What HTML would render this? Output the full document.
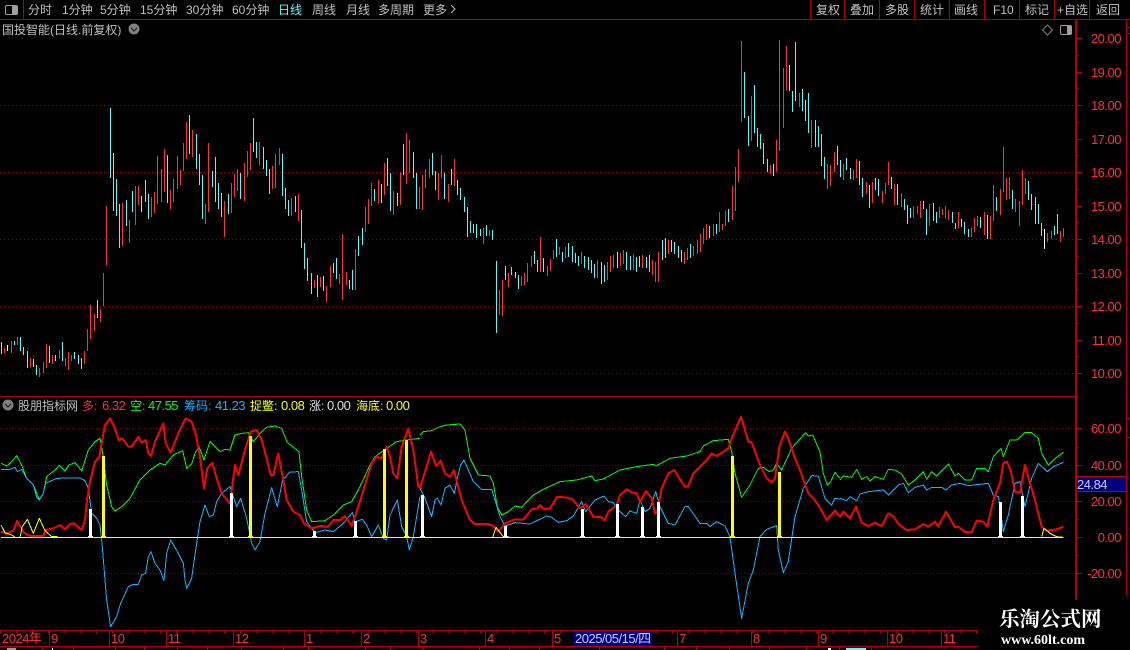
<!DOCTYPE html>
<html><head><meta charset="utf-8"><style>
html,body{margin:0;padding:0;background:#000;overflow:hidden}
svg{display:block}
text{font-family:"Liberation Sans","WenQuanYi Zen Hei","Noto Sans CJK SC",sans-serif;font-size:12px}
.n{font-size:13px;letter-spacing:-.5px}
.g{fill:#c0c0c0}
.a{fill:#ff3232;text-anchor:end}
.b{fill:#ff3232}
.c{stroke:#54fcfc;stroke-width:3;fill:none;shape-rendering:crispEdges}
.r{stroke:#ff3232;stroke-width:3;fill:none;shape-rendering:crispEdges}
.w{stroke:#fff;stroke-width:3;fill:none;shape-rendering:crispEdges}
.l{fill:none;stroke-linejoin:round;shape-rendering:crispEdges}
</style></head><body>
<svg width="1130" height="650" viewBox="0 0 1130 650" xmlns="http://www.w3.org/2000/svg">
<rect width="1130" height="650" fill="#000"/>
<!-- grid -->
<g stroke="#a00000" stroke-dasharray="1 3" shape-rendering="crispEdges" fill="none">
<path d="M0 105.5H1075M0 172.5H1075M0 239.5H1075M0 306.5H1075M0 373.5H1075"/>
</g>
<g stroke="#800000" stroke-dasharray="1 2" shape-rendering="crispEdges" fill="none">
<path d="M0 428.5H1075M0 465.5H1075M0 501.5H1075M0 573.5H1075"/>
</g>
<!-- candles -->
<g transform="translate(0,100) scale(.33333)">
<path class="c" d="M4 726V762M43 723V735M61 711V753M70 741V765M82 753V804M100 777V801M109 795V825M148 738V789M166 765V783M187 726V783M223 756V777M235 765V792M244 774V807M292 600V654M331 24V234M340 159V333M349 237V348M358 312V444M379 300V378M397 273V336M424 288V336M436 240V306M445 282V357M502 165V309M568 45V162M589 102V207M598 162V255M607 225V357M637 213V261M646 171V306M655 249V327M664 279V351M685 282V342M721 219V297M760 54V156M769 126V174M790 141V207M799 180V228M808 207V282"/>
<path class="r" d="M13 744V759M34 723V759M52 711V735M91 774V801M118 804V831M130 786V819M139 732V804M157 765V792M178 750V777M196 774V798M205 756V810M214 765V783M253 753V792M262 687V753M271 615V717M283 642V693M301 627V666M310 519V618M319 318V495M367 309V438M388 360V429M406 258V375M415 258V315M454 291V351M463 276V339M472 168V312M484 207V306M493 147V276M511 270V327M520 237V306M532 168V267M541 210V255M550 129V213M559 66V177M577 90V171M616 312V372M625 129V336M673 303V411M694 249V339M703 222V291M712 207V273M733 189V303M742 153V231M751 129V210M778 126V195M817 198V267M826 162V264M838 144V195"/>
<path class="w" d="M22 735V753"/>
</g>
<g transform="translate(280,120) scale(.33333)">
<path class="c" d="M7 102V228M16 204V267M25 240V288M46 228V276M64 270V384M73 369V447M82 414V483M94 459V522M112 465V531M130 468V513M160 429V459M169 414V477M208 480V507M217 450V510M235 348V408M247 324V375M283 207V243M304 192V249M322 114V198M331 159V273M352 219V258M370 72V165M400 96V174M409 159V267M457 99V165M466 153V210M493 159V237M514 147V195M532 180V225M541 204V240M553 231V276M562 261V351M571 303V339M580 312V339M589 312V354M601 327V348M619 315V348M637 330V360M649 423V639M676 438V480M694 441V465M706 456V474M715 465V507M763 393V432M772 420V456M790 414V456M829 357V411"/>
<path class="r" d="M34 234V288M55 222V303M103 480V504M121 471V501M139 498V546M151 438V501M178 462V492M187 342V540M199 456V495M226 387V510M256 261V336M265 237V312M274 189V258M295 180V249M313 129V225M340 213V285M361 156V255M379 39V192M388 60V159M418 201V267M427 165V270M436 147V204M448 117V174M475 159V240M484 105V174M505 192V246M523 117V198M610 324V372M628 330V348M658 510V585M667 480V588M685 459V501M724 468V498M733 459V495M742 429V486M754 408V441M781 351V456M802 438V468M811 417V453M820 390V417M838 381V405"/>
</g>
<g shape-rendering="crispEdges" fill="none" stroke-width="1">
<path stroke="#54fcfc" d="M562.5 252V262M568.5 243V257M572.5 246V262M575.5 253V263M578.5 256V266M584.5 256V268M588.5 257V270M591.5 260V273M594.5 264V278M601.5 262V284M604.5 265V282M617.5 252V268M626.5 252V270M630.5 256V270M636.5 257V272M639.5 256V267M646.5 257V268M649.5 255V272M662.5 240V260M665.5 238V258M671.5 240V252M674.5 242V254M678.5 246V258M681.5 250V262M690.5 244V258M709.5 226V238M716.5 224V234"/>
<path stroke="#ff3232" d="M565.5 247V258M581.5 252V264M597.5 260V278M607.5 262V280M610.5 256V272M613.5 255V268M620.5 253V266M623.5 250V264M633.5 254V270M642.5 255V268M652.5 260V275M655.5 262V282M658.5 252V282M668.5 240V254M684.5 252V264M687.5 248V260M693.5 246V256M697.5 240V254M700.5 234V252M703.5 228V244M706.5 224V240M713.5 224V236M719.5 212V232"/>
</g>
<g transform="translate(720,30) scale(.33333)">
<path class="c" d="M25 537V576M73 126V264M85 258V348M103 165V309M112 294V351M121 312V357M130 339V402M142 387V426M160 402V438M208 105V183M217 183V246M226 36V213M247 177V243M256 210V273M265 189V309M286 270V351M295 288V351M304 312V408M313 381V447M352 348V405M361 390V441M379 384V420M391 414V447M418 393V465M427 444V501M448 465V534M466 444V480M475 447V498M514 441V477M532 462V525M553 507V540M562 525V582M571 534V564"/>
<path class="r" d="M7 582V600M16 543V588M37 468V570M46 411V543M55 357V456M64 33V276M94 198V333M151 405V432M169 330V423M178 30V363M190 114V294M199 48V180M238 189V231M274 270V354M322 402V477M331 405V468M343 366V426M370 402V450M400 420V450M409 387V444M439 456V492M457 456V519M487 483V519M496 459V492M505 396V465M523 462V525M544 489V531M580 528V564M592 528V552"/>
</g>
<g transform="translate(920,130) scale(.33333)">
<path class="c" d="M10 213V237M19 237V315M40 219V273M49 246V279M97 246V279M106 279V297M124 267V291M133 276V312M145 297V321M181 261V294M202 255V327M229 201V243M277 180V237M325 153V210M334 192V240M346 201V282M355 222V282M364 279V318M403 288V315M412 252V312"/>
<path class="r" d="M1 213V264M28 222V288M58 231V264M67 237V255M76 228V267M85 240V270M115 246V294M154 294V321M163 264V306M172 258V288M193 246V315M211 258V327M220 165V273M241 177V255M250 51V186M259 144V210M268 141V207M286 207V246M298 213V288M307 120V225M316 144V192M382 309V336M394 303V327M421 303V336M430 294V321"/>
<path class="w" d="M373 297V357"/>
</g>
<!-- indicator lines -->
<g class="l" stroke="#00ff00" stroke-width="3">
<polyline transform="translate(0,390) scale(.33333)" points="3,220 20,228 35,215 50,197 65,225 80,265 100,285 118,328 130,310 140,260 165,240 178,226 195,243 207,225 225,218 245,243 265,180 285,155 300,145 308,190 320,285 335,350 345,363 365,350 390,325 420,270 450,240 480,220 495,225 520,195 548,182 560,235 575,222 585,190 597,170 612,210 630,155 660,185 675,178 690,180 705,135 725,130 745,128 760,155 785,125 800,112 825,108 845,115 862,158 885,175 897,185 905,260 920,360 935,395 975,392 1000,375 1030,345 1055,335 1075,300 1110,225 1125,200 1160,175 1190,155 1220,150 1260,145"/>
<polyline transform="translate(420,410) scale(.33333)" points="0,75 10,65 35,62 55,52 80,45 120,42 135,60 150,145 175,195 210,198 220,220 232,290 245,315 265,305 285,288 305,292 320,275 340,255 370,238 420,215 470,210 515,198 525,212 550,207 600,180 650,170 700,163 708,168 750,145 800,138 840,125 850,108 880,92 925,88 935,125 945,190 965,262 990,225 1015,175 1030,172 1048,185 1060,180 1070,160 1085,180 1115,115 1157,68 1165,78 1178,75 1200,125 1210,190 1222,225 1232,215 1245,187 1260,205"/>
<polyline transform="translate(840,400) scale(.33333)" points="0,240 10,228 35,232 50,208 65,238 80,230 90,243 105,230 130,238 145,208 165,210 185,222 205,255 225,240 250,215 260,238 275,215 290,228 325,192 345,228 355,220 375,240 395,240 410,205 435,205 445,215 460,170 483,145 490,170 510,120 530,120 555,98 575,98 595,115 605,160 625,195 640,180 670,157"/>
</g>
<g class="l" stroke="#14b4ff" stroke-width="3">
<polyline transform="translate(0,410) scale(.33333)" points="3,178 30,178 45,172 52,185 65,178 80,205 100,225 110,262 118,270 130,250 137,220 170,205 210,204 240,204 255,212 265,235 275,310 290,325 300,345 306,400 320,570 332,650 350,620 360,585 385,530 400,523 415,523 425,495 437,490 445,440 453,425 465,460 480,480 492,512 500,430 512,390 535,430 550,460 555,510 560,535 575,505 590,400 600,335 615,285 628,320"/>
<polyline transform="translate(0,390) scale(.33333)" points="628,380 640,375 650,335 665,310 690,290 710,350 722,325 740,385 755,460 765,480 780,455 795,370 815,293 832,350 848,270 870,246 895,245 905,300 920,395 945,428 975,420 1000,425 1030,400 1057,368 1065,395 1087,388 1100,405 1115,440 1135,405 1150,445 1160,450 1170,375 1192,330 1205,410 1220,440 1228,480 1240,440 1260,320"/>
<polyline transform="translate(420,410) scale(.33333)" points="0,235 15,265 35,320 45,270 52,265 63,285 75,235 90,225 103,250 112,205 122,165 132,150 145,180 160,215 185,238 215,238 225,270 240,320 255,348 285,338 330,342 380,318 395,322 415,337 440,332 460,318 485,275 497,305 525,270 552,258 565,275 580,278 600,305 617,320 630,303 650,310 660,270 675,305 690,295 707,245 720,290 745,340 765,345 795,290 805,290 840,340 860,340 870,350 890,335 915,348 930,380 945,490 965,625 985,520 1000,480 1020,380 1040,358 1070,347 1075,420 1090,488 1105,455 1125,320 1150,235 1175,197 1195,198 1215,265 1235,285 1245,265 1260,267"/>
<polyline transform="translate(840,400) scale(.33333)" points="0,295 20,302 30,290 50,302 60,282 85,275 130,270 145,285 175,255 190,250 205,278 225,262 250,255 260,270 275,262 305,262 318,270 335,255 360,250 385,257 445,250 460,285 475,290 490,395 505,345 525,250 540,245 555,320 575,235 595,190 622,215 640,200 670,187"/>
</g>
<g class="l" stroke="#ff0000" stroke-width="6">
<polyline transform="translate(0,410) scale(.33333)" points="3,365 12,368 20,372 30,366 40,362 52,332 62,352 72,368 90,378 130,378 136,360 160,355 180,345 195,358 210,342 222,340 245,360 255,330 262,262 270,215 285,155 298,140 305,100 315,45 330,25 345,55 356,90 367,85 385,110 395,110 415,80 425,98 437,90 445,130 453,138 465,95 490,40 497,100 512,128 535,70 557,25 575,35 588,75 597,125 600,140"/>
<polyline transform="translate(0,390) scale(.33333)" points="600,200 612,295 622,235 637,218 650,265 665,310 690,340 705,225 715,255 735,180 752,125 770,120 785,150 800,205 812,255 820,255 835,190 848,260 860,330 880,365 900,375 912,400 935,415 960,408 985,410 1000,390 1020,390 1035,378 1055,408 1075,350 1115,220 1130,200 1145,205 1160,170 1170,200 1180,250 1192,265 1205,170 1225,115 1240,180 1255,290 1266,295"/>
<polyline transform="translate(420,410) scale(.33333)" points="0,235 15,185 33,125 48,168 62,152 75,190 90,200 102,180 112,220 125,270 150,330 165,342 205,342 220,348 235,365 255,340 285,328 310,328 335,298 352,295 360,285 372,298 390,295 412,260 440,263 458,268 480,295 497,282 520,320 545,322 553,332 565,305 590,285 600,255 620,238 635,247 650,250 660,275 678,243 695,265 705,310 712,305 725,235 745,190 763,180 780,208 795,230 805,228 820,190 860,150 875,130 890,138 925,115 935,85 963,20 985,95 995,97 1020,165 1040,205 1055,217 1065,205 1078,110 1095,65 1105,85 1125,145 1140,180 1165,250 1180,265 1195,285 1220,330 1245,302 1260,320"/>
<polyline transform="translate(840,400) scale(.33333)" points="0,350 10,335 30,355 48,320 65,368 85,378 105,368 125,378 145,340 160,348 175,372 200,390 225,388 250,372 265,380 285,365 295,380 318,335 345,382 355,380 375,396 395,396 410,362 430,365 442,380 460,300 480,250 490,190 500,185 512,210 525,275 540,278 555,195 570,250 585,300 605,380 620,392 650,388 670,380"/>
</g>
<g class="l" stroke="#ffff00" stroke-width="3">
<polyline transform="translate(0,410) scale(.33333)" points="3,345 15,368 35,375 45,381"/>
<polyline transform="translate(0,410) scale(.33333)" points="60,382 67,350 82,328 100,370 118,325 135,362 155,380 172,380"/>
<polyline transform="translate(420,410) scale(.33333)" points="218,382 228,352 250,380 270,382"/>
<polyline transform="translate(840,400) scale(.33333)" points="605,410 612,385 630,400 650,410 670,412"/>
</g>
<!-- signal bars -->
<g shape-rendering="crispEdges">
<g fill="#fff">
<rect x="89" y="509" width="3" height="28"/><rect x="88" y="536" width="5" height="1"/>
<rect x="230" y="493" width="3" height="44"/><rect x="229" y="536" width="5" height="1"/>
<rect x="313" y="531" width="3" height="6"/><rect x="312" y="536" width="5" height="1"/>
<rect x="354" y="521" width="3" height="16"/><rect x="353" y="536" width="5" height="1"/>
<rect x="421" y="495" width="3" height="42"/><rect x="420" y="536" width="5" height="1"/>
<rect x="504" y="526" width="3" height="11"/><rect x="503" y="536" width="5" height="1"/>
<rect x="581" y="509" width="3" height="28"/><rect x="580" y="536" width="5" height="1"/>
<rect x="616" y="504" width="3" height="33"/><rect x="615" y="536" width="5" height="1"/>
<rect x="641" y="507" width="3" height="30"/><rect x="640" y="536" width="5" height="1"/>
<rect x="657" y="502" width="3" height="35"/><rect x="656" y="536" width="5" height="1"/>
<rect x="999" y="502" width="3" height="35"/><rect x="998" y="536" width="5" height="1"/>
<rect x="1021" y="496" width="3" height="41"/><rect x="1020" y="536" width="5" height="1"/>
</g>
<g fill="#ffff00">
<rect x="102" y="456" width="3" height="81"/><rect x="101" y="536" width="5" height="1"/>
<rect x="249" y="436" width="3" height="101"/><rect x="248" y="536" width="5" height="1"/>
<rect x="383" y="449" width="3" height="88"/><rect x="382" y="536" width="5" height="1"/>
<rect x="405" y="440" width="3" height="97"/><rect x="404" y="536" width="5" height="1"/>
<rect x="731" y="456" width="3" height="81"/><rect x="730" y="536" width="5" height="1"/>
<rect x="778" y="472" width="3" height="65"/><rect x="777" y="536" width="5" height="1"/>
<rect x="1" y="537" width="1062" height="1"/>
</g>
</g>
<!-- frame -->
<g fill="#b40000" shape-rendering="crispEdges">
<rect x="0" y="19" width="1130" height="1"/>
<rect x="0" y="396" width="1076" height="1"/>
<rect x="1075" y="20" width="2" height="580"/>
<rect x="1126" y="20" width="1" height="575"/>
<rect x="23" y="0" width="1" height="19"/>
<rect x="810" y="0" width="1" height="19"/><rect x="844" y="0" width="1" height="19"/><rect x="879" y="0" width="1" height="19"/><rect x="914" y="0" width="1" height="19"/><rect x="949" y="0" width="1" height="19"/><rect x="984" y="0" width="1" height="19"/><rect x="1019" y="0" width="1" height="19"/><rect x="1054" y="0" width="1" height="19"/><rect x="1089" y="0" width="1" height="19"/>
<rect x="0" y="630" width="978" height="1"/>
<rect x="0" y="646" width="978" height="1"/>
<rect x="49" y="630" width="1" height="16"/><rect x="109" y="630" width="1" height="16"/><rect x="166" y="630" width="1" height="16"/><rect x="233" y="630" width="1" height="16"/><rect x="304" y="630" width="1" height="16"/><rect x="361" y="630" width="1" height="16"/><rect x="418" y="630" width="1" height="16"/><rect x="485" y="630" width="1" height="16"/><rect x="552" y="630" width="1" height="16"/><rect x="677" y="630" width="1" height="16"/><rect x="751" y="630" width="1" height="16"/><rect x="818" y="630" width="1" height="16"/><rect x="887" y="630" width="1" height="16"/><rect x="941" y="630" width="1" height="16"/>
<!-- price ticks -->
<rect x="1077" y="38" width="5" height="1"/><rect x="1077" y="72" width="5" height="1"/><rect x="1077" y="105" width="5" height="1"/><rect x="1077" y="139" width="5" height="1"/><rect x="1077" y="172" width="5" height="1"/><rect x="1077" y="206" width="5" height="1"/><rect x="1077" y="239" width="5" height="1"/><rect x="1077" y="273" width="5" height="1"/><rect x="1077" y="306" width="5" height="1"/><rect x="1077" y="340" width="5" height="1"/><rect x="1077" y="373" width="5" height="1"/>
<rect x="1077" y="55" width="2" height="1"/><rect x="1077" y="88" width="2" height="1"/><rect x="1077" y="122" width="2" height="1"/><rect x="1077" y="155" width="2" height="1"/><rect x="1077" y="189" width="2" height="1"/><rect x="1077" y="222" width="2" height="1"/><rect x="1077" y="256" width="2" height="1"/><rect x="1077" y="289" width="2" height="1"/><rect x="1077" y="323" width="2" height="1"/><rect x="1077" y="356" width="2" height="1"/>
<rect x="1077" y="428" width="5" height="1"/><rect x="1077" y="465" width="5" height="1"/><rect x="1077" y="501" width="5" height="1"/><rect x="1077" y="537" width="5" height="1"/><rect x="1077" y="573" width="5" height="1"/>
<rect x="1077" y="447" width="2" height="1"/><rect x="1077" y="483" width="2" height="1"/><rect x="1077" y="519" width="2" height="1"/><rect x="1077" y="555" width="2" height="1"/>
<rect x="1127" y="418" width="3" height="1"/><rect x="1127" y="437" width="3" height="1"/><rect x="1127" y="27" width="3" height="1"/><rect x="1127" y="33" width="3" height="1"/>
<!-- bottom row ticks -->
<rect x="42" y="646" width="1" height="4"/><rect x="73" y="646" width="1" height="4"/><rect x="115" y="646" width="1" height="4"/><rect x="144" y="646" width="1" height="4"/><rect x="177" y="646" width="1" height="4"/><rect x="207" y="646" width="1" height="4"/><rect x="241" y="646" width="1" height="4"/><rect x="283" y="646" width="1" height="4"/><rect x="308" y="646" width="1" height="4"/><rect x="365" y="646" width="1" height="4"/><rect x="390" y="646" width="1" height="4"/><rect x="422" y="646" width="1" height="4"/><rect x="479" y="646" width="1" height="4"/><rect x="509" y="646" width="1" height="4"/><rect x="539" y="646" width="1" height="4"/><rect x="599" y="646" width="1" height="4"/><rect x="664" y="646" width="1" height="4"/><rect x="696" y="646" width="1" height="4"/><rect x="729" y="646" width="1" height="4"/><rect x="769" y="646" width="1" height="4"/><rect x="806" y="646" width="1" height="4"/><rect x="839" y="646" width="1" height="4"/><rect x="871" y="646" width="1" height="4"/>
</g>
<path d="M0 632H978" stroke="#b40000" stroke-width="3" stroke-dasharray="1 15" shape-rendering="crispEdges"/>
<rect x="7" y="648" width="9" height="2" fill="#999"/>
<rect x="52" y="648" width="1" height="2" fill="#fff"/>
<rect x="828" y="648" width="3" height="2" fill="#fff"/>
<rect x="846" y="648" width="20" height="2" fill="#54fcfc"/>
<!-- value box and date box -->
<rect x="1077" y="477" width="49" height="14" fill="#000080"/>
<rect x="1077" y="476" width="49" height="1" fill="#c00000"/>
<rect x="1077" y="491" width="49" height="1" fill="#c00000"/>
<text x="1077" y="489" class="n" fill="#c8c8ff">24.84</text>
<rect x="573" y="631" width="79" height="15" fill="#000080"/>
<text x="575" y="643" class="n" fill="#c8c8ff">2025/05/15/四</text>
<!-- icons -->
<rect x="5.5" y="5.5" width="12" height="9" rx="1.5" fill="none" stroke="#a0a0a0"/>
<rect x="12" y="6" width="5" height="8" fill="#a0a0a0"/>
<circle cx="134" cy="29" r="5.5" fill="#808080"/>
<path d="M131 28l3 3 3-3" stroke="#222" stroke-width="1.2" fill="none"/>
<path d="M1047.5 25l5 5-5 5-5-5z" fill="none" stroke="#808080"/>
<rect x="1060.5" y="25.5" width="11" height="9" rx="1.5" fill="none" stroke="#a0a0a0"/>
<rect x="1067" y="26" width="4" height="8" fill="#a0a0a0"/>
<circle cx="8" cy="405" r="5.5" fill="#808080"/>
<path d="M5 404l3 3 3-3" stroke="#222" stroke-width="1.2" fill="none"/>
<!-- top bar -->
<g class="g">
<text x="28" y="14">分时</text><text x="62" y="14">1分钟</text><text x="100" y="14">5分钟</text><text x="140" y="14">15分钟</text><text x="186" y="14">30分钟</text><text x="232" y="14">60分钟</text>
<text x="278" y="14" fill="#54fcfc" style="fill:#54fcfc">日线</text>
<text x="312" y="14">周线</text><text x="346" y="14">月线</text><text x="378" y="14">多周期</text><text x="423" y="14">更多</text>
<text x="816" y="14">复权</text><text x="850" y="14">叠加</text><text x="885" y="14">多股</text><text x="920" y="14">统计</text><text x="954" y="14">画线</text><text x="993" y="14">F10</text><text x="1025" y="14">标记</text><text x="1057" y="14">+自选</text><text x="1096" y="14">返回</text>
<text x="2" y="34">国投智能(日线.前复权)</text>
<text x="18" y="410">股朋指标网</text>
</g>
<path d="M451 5l4 4-4 4" stroke="#c0c0c0" fill="none"/>
<!-- legend -->
<text x="82" y="410" fill="#ff3232">多:</text><text x="102" y="410" class="n" fill="#ff3232">6.32</text>
<text x="130" y="410" fill="#00ff00">空:</text><text x="148" y="410" class="n" fill="#00ff00">47.55</text>
<text x="184" y="410" fill="#14b4ff">筹码:</text><text x="215" y="410" class="n" fill="#14b4ff">41.23</text>
<text x="250" y="410" fill="#ffff00">捉鳖:</text><text x="281" y="410" class="n" fill="#ffff00">0.08</text>
<text x="309" y="410" fill="#e0e0e0">涨:</text><text x="327" y="410" class="n" fill="#e0e0e0">0.00</text>
<text x="356" y="410" fill="#ffff00">海底:</text><text x="386" y="410" class="n" fill="#ffff00">0.00</text>
<!-- price labels -->
<g>
<text x="1121" y="43" class="n a">20.00</text><text x="1121" y="77" class="n a">19.00</text><text x="1121" y="110" class="n a">18.00</text><text x="1121" y="144" class="n a">17.00</text><text x="1121" y="177" class="n a">16.00</text><text x="1121" y="211" class="n a">15.00</text><text x="1121" y="244" class="n a">14.00</text><text x="1121" y="278" class="n a">13.00</text><text x="1121" y="311" class="n a">12.00</text><text x="1121" y="345" class="n a">11.00</text><text x="1121" y="378" class="n a">10.00</text>
<text x="1121" y="433" class="n a">60.00</text><text x="1121" y="470" class="n a">40.00</text><text x="1121" y="506" class="n a">20.00</text><text x="1121" y="542" class="n a">0.00</text><text x="1121" y="578" class="n a">-20.00</text>
</g>
<!-- time labels -->
<g>
<text x="2" y="643" class="n b">2024年</text><text x="51" y="643" class="n b">9</text><text x="111" y="643" class="n b">10</text><text x="168" y="643" class="n b">11</text><text x="235" y="643" class="n b">12</text><text x="306" y="643" class="n b">1</text><text x="363" y="643" class="n b">2</text><text x="420" y="643" class="n b">3</text><text x="487" y="643" class="n b">4</text><text x="554" y="643" class="n b">5</text><text x="679" y="643" class="n b">7</text><text x="753" y="643" class="n b">8</text><text x="820" y="643" class="n b">9</text><text x="889" y="643" class="n b">10</text><text x="943" y="643" class="n b">11</text>
</g>
<!-- watermark -->
<rect x="978" y="600" width="152" height="50" fill="#000"/>
<text x="999" y="626" fill="#fff" style="font-family:'Noto Serif CJK SC','Liberation Serif',serif;font-size:20.5px;font-weight:700">乐淘公式网</text>
<text x="1001" y="644" fill="#fff" style="font-family:'Liberation Serif',serif;font-size:14px;font-weight:700">www.60lt.com</text>
</svg>
</body></html>
